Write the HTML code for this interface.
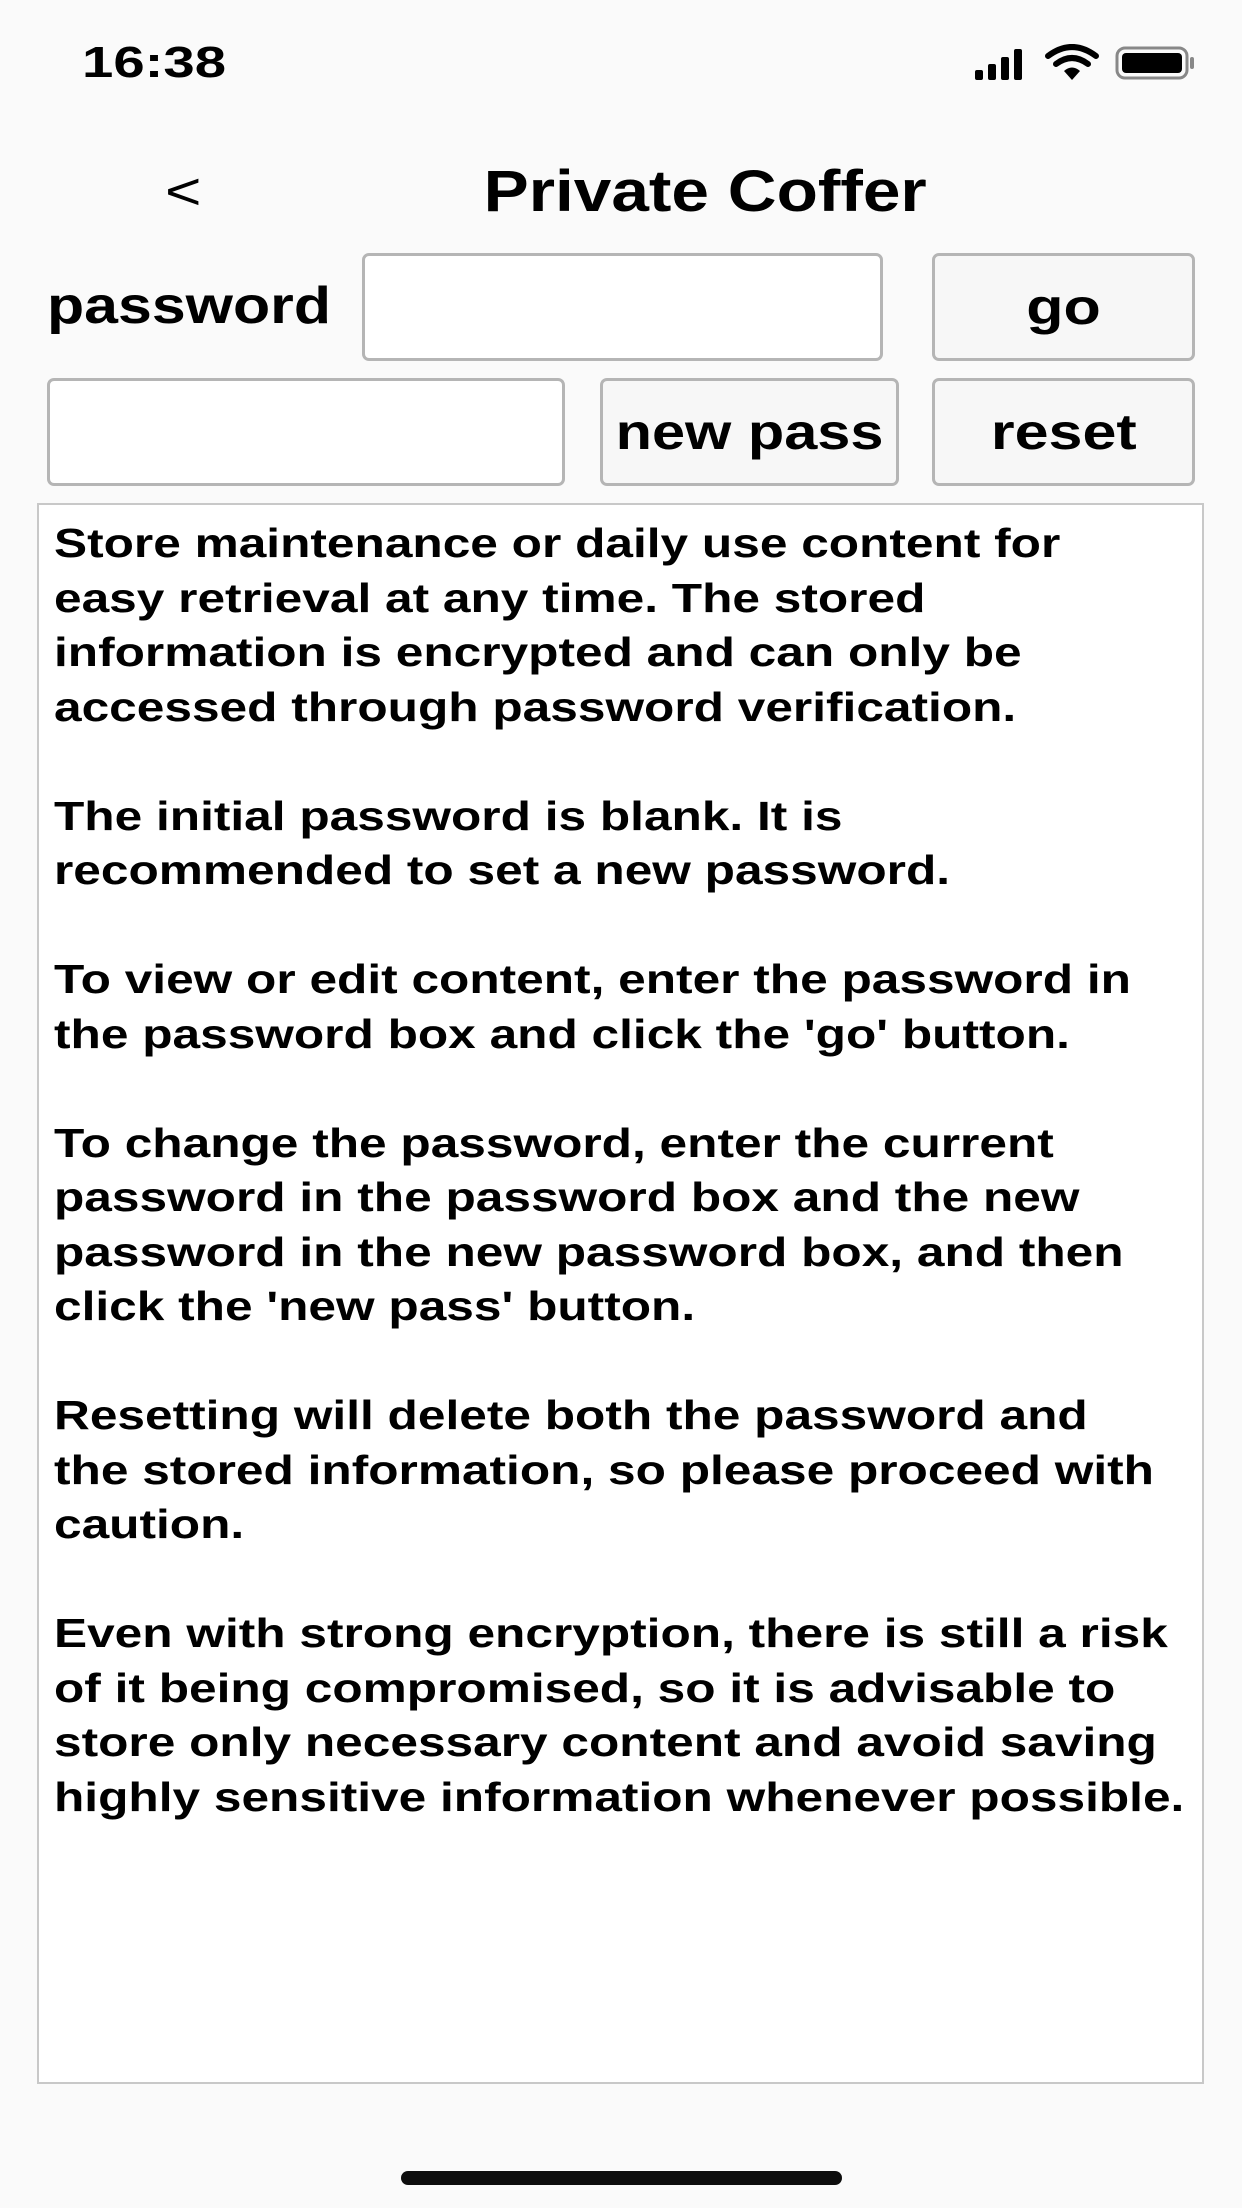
<!DOCTYPE html>
<html><head><meta charset="utf-8"><style>
html,body{margin:0;padding:0;}
body{width:1242px;height:2208px;background:#fafafa;position:relative;overflow:hidden;font-family:"Liberation Sans",sans-serif;color:#000;}
.a{position:absolute;}
.s{display:inline-block;transform-origin:center;}
.box{position:absolute;background:#fff;border:3px solid #b5b5b5;border-radius:7px;box-sizing:border-box;}
.btn{position:absolute;background:#f7f7f7;border:3px solid #b5b5b5;border-radius:7px;box-sizing:border-box;display:flex;align-items:center;justify-content:center;font-size:50px;font-weight:bold;}
.btn span{display:inline-block;transform:scaleX(1.22);}
.txt{position:absolute;left:37px;top:503px;width:1167px;height:1581px;background:#fff;border:2px solid #c8c8c8;box-sizing:border-box;padding:11px 0 0 15px;overflow:hidden;}
.txt div{font-size:40.5px;font-weight:bold;line-height:54.5px;white-space:nowrap;transform:scaleX(1.225);transform-origin:left top;}
</style></head><body>
<div class="a" style="left:82px;top:38px;font-size:44px;font-weight:bold;transform:scaleX(1.28);transform-origin:left;">16:38</div>
<svg class="a" style="left:970px;top:44px" width="230" height="38" viewBox="0 0 230 38">
<rect x="5" y="26" width="8" height="10" rx="2"/><rect x="18" y="20" width="8" height="16" rx="2"/><rect x="31" y="13" width="8" height="23" rx="2"/><rect x="44" y="5" width="8" height="31" rx="2"/>
<path d="M78 12 Q102 -6 126 12" stroke="#000" stroke-width="6" fill="none" stroke-linecap="round"/>
<path d="M86 20 Q102 8 118 20" stroke="#000" stroke-width="6" fill="none" stroke-linecap="round"/>
<path d="M94 27 L102 36 L110 27 Q102 20 94 27Z"/>
<rect x="147" y="4" width="70" height="30" rx="8" fill="none" stroke="#888" stroke-width="3"/>
<rect x="152" y="9" width="60" height="20" rx="4"/>
<rect x="220" y="13" width="4" height="12" rx="2" fill="#888"/>
</svg>
<div class="a" style="left:165px;top:162px;font-size:52px;transform:scaleX(1.2);transform-origin:left;">&lt;</div>
<div class="a" style="left:0;width:1410px;text-align:center;top:158px;font-size:58px;font-weight:bold;"><span class="s" style="transform:scaleX(1.165);">Private Coffer</span></div>
<div class="a" style="left:47px;top:276px;font-size:52px;font-weight:bold;transform:scaleX(1.17);transform-origin:left;">password</div>
<div class="box" style="left:362px;top:253px;width:521px;height:108px;"></div>
<div class="btn" style="left:932px;top:253px;width:263px;height:108px;"><span>go</span></div>
<div class="box" style="left:47px;top:378px;width:518px;height:108px;"></div>
<div class="btn" style="left:600px;top:378px;width:299px;height:108px;"><span style="transform:scaleX(1.19)">new pass</span></div>
<div class="btn" style="left:932px;top:378px;width:263px;height:108px;"><span>reset</span></div>
<div class="txt"><div>Store maintenance or daily use content for<br>easy retrieval at any time. The stored<br>information is encrypted and can only be<br>accessed through password verification.<br><br>The initial password is blank. It is<br>recommended to set a new password.<br><br>To view or edit content, enter the password in<br>the password box and click the 'go' button.<br><br>To change the password, enter the current<br>password in the password box and the new<br>password in the new password box, and then<br>click the 'new pass' button.<br><br>Resetting will delete both the password and<br>the stored information, so please proceed with<br>caution.<br><br>Even with strong encryption, there is still a risk<br>of it being compromised, so it is advisable to<br>store only necessary content and avoid saving<br>highly sensitive information whenever possible.</div></div>
<div class="a" style="left:401px;top:2171px;width:441px;height:14px;border-radius:7px;background:#0d0d0d;"></div>
</body></html>
